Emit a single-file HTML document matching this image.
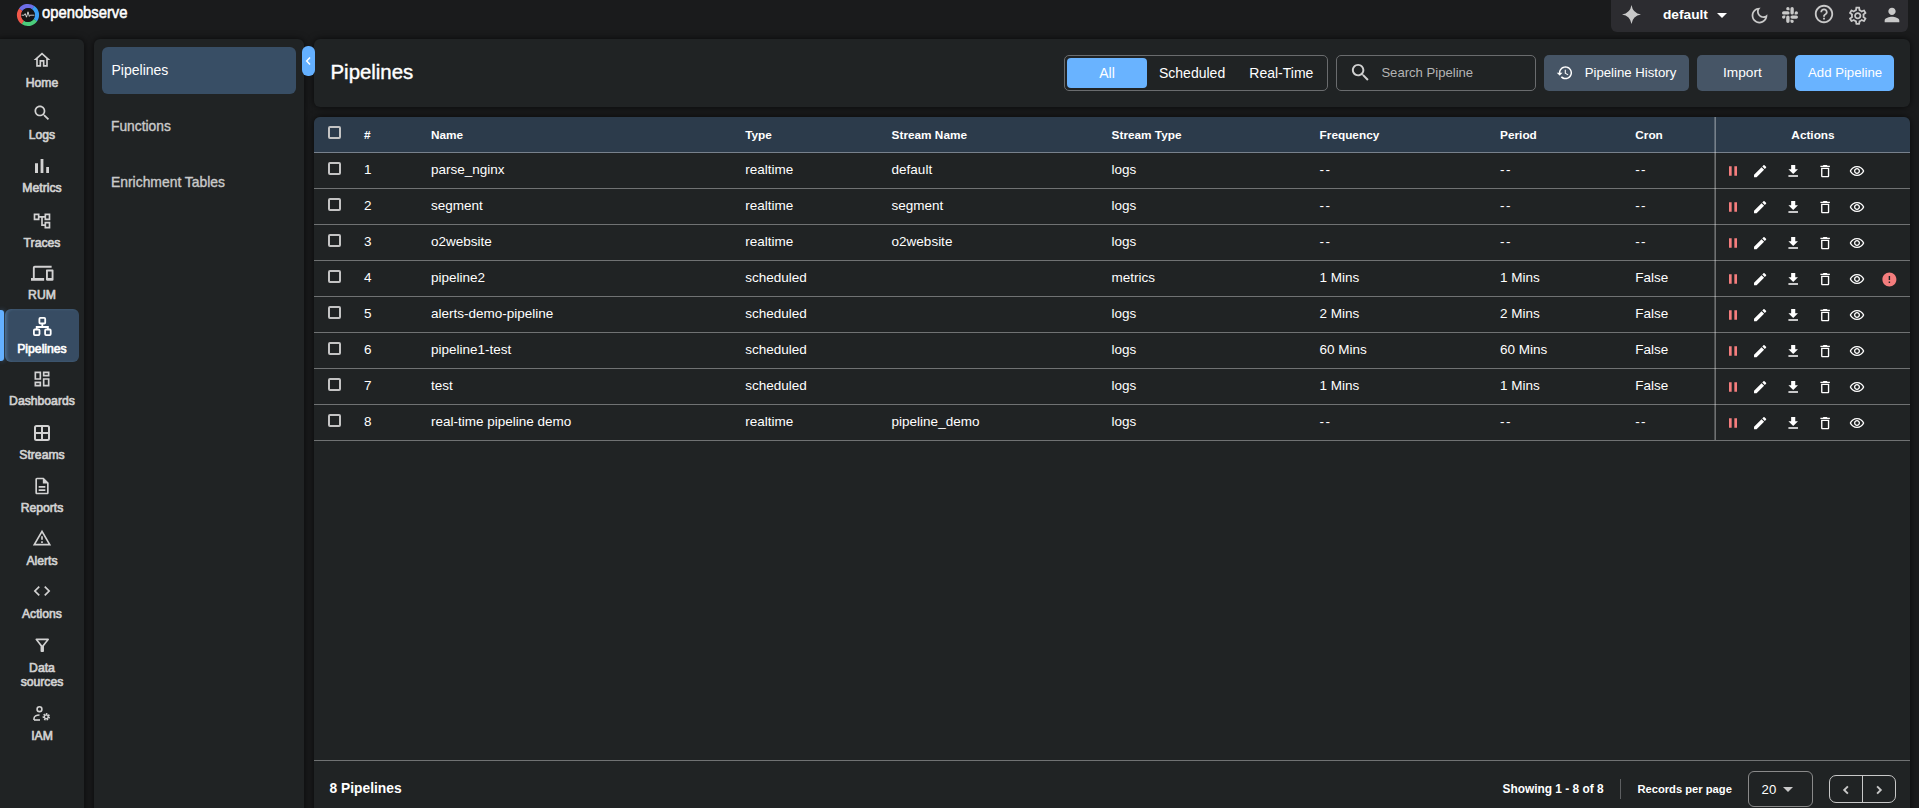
<!DOCTYPE html>
<html><head><meta charset="utf-8">
<style>
*{box-sizing:border-box;margin:0;padding:0}
html,body{width:1919px;height:808px;overflow:hidden;background:#1a1b1c;font-family:"Liberation Sans",sans-serif;color:#fff}
.abs{position:absolute}
.panel{position:absolute;background:#202324;box-shadow:0 0 7px rgba(0,0,0,.7)}
.t{position:absolute;white-space:nowrap;line-height:1}
svg{position:absolute;overflow:visible}
.cb{position:absolute;width:13px;height:13px;border:2px solid #c4c4c4;border-radius:2px}
.hl{position:absolute;left:314px;width:1596px;height:1px;background:rgba(255,255,255,.36)}
</style></head><body>

<svg style="left:16.5px;top:4px" width="22" height="22" viewBox="0 0 22 22">
<circle cx="11" cy="11" r="9" fill="none" stroke="#6e6ee8" stroke-width="4.2" stroke-dasharray="14.2 42.5" transform="rotate(-145 11 11)"/>
<circle cx="11" cy="11" r="9" fill="none" stroke="#3aa0f6" stroke-width="4.2" stroke-dasharray="14.2 42.5" transform="rotate(-55 11 11)"/>
<circle cx="11" cy="11" r="9" fill="none" stroke="#4bcd7c" stroke-width="4.2" stroke-dasharray="14.2 42.5" transform="rotate(35 11 11)"/>
<circle cx="11" cy="11" r="9" fill="none" stroke="#f1584a" stroke-width="4.2" stroke-dasharray="14.2 42.5" transform="rotate(125 11 11)"/>
<circle cx="11" cy="11" r="6.9" fill="#151515"/>
<path d="M4.6 11.2h2.6l1-1.6 1.3 3.6 1.5-5.4 1.3 4.6 0.9-1.2h4.2" fill="none" stroke="#f2f2f2" stroke-width="0.8"/>
</svg>
<div class="t" style="left:41.8px;top:4.47px;font-size:17.4px;color:#fff;font-weight:normal;-webkit-text-stroke:0.6px #fff;transform-origin:0 0;transform:scaleX(0.85)">openobserve</div>
<div class="abs" style="left:1611px;top:-6px;width:297px;height:37.5px;background:#2c2c30;border-radius:6px"></div>
<svg style="left:1621.5px;top:5px" width="19" height="19" viewBox="0 0 24 24"><path fill="#c9c9c9" d="M12 0Q13.6 10.4 24 12Q13.6 13.6 12 24Q10.4 13.6 0 12Q10.4 10.4 12 0z"/></svg>
<div class="t" style="left:1663px;top:7.60px;font-size:13.7px;color:#fff;font-weight:bold;">default</div>
<svg style="left:1710px;top:3px" width="24" height="24" viewBox="0 0 24 24"><path fill="#fff" d="M7 10l5 5 5-5z"/></svg>
<svg style="left:1749px;top:5px" width="21" height="21" viewBox="0 0 24 24"><path fill="#c9c9c9" d="M9.37 5.51c-.18.64-.27 1.31-.27 1.99 0 4.08 3.32 7.4 7.4 7.4.68 0 1.35-.09 1.99-.27C17.45 17.19 14.93 19 12 19c-3.86 0-7-3.14-7-7 0-2.93 1.81-5.450 4.37-6.49zM12 3c-4.97 0-9 4.03-9 9s4.03 9 9 9 9-4.03 9-9c0-.46-.04-.92-.1-1.36-.98 1.37-2.58 2.26-4.4 2.26-2.98 0-5.4-2.42-5.4-5.4 0-1.81.89-3.42 2.26-4.4-.44-.06-.9-.1-1.36-.1z"/></svg>
<svg style="left:1782px;top:7px" width="16" height="16" viewBox="0 0 24 24"><path fill="#c9c9c9" d="M5.042 15.165a2.528 2.528 0 0 1-2.52 2.523A2.528 2.528 0 0 1 0 15.165a2.527 2.527 0 0 1 2.522-2.52h2.52v2.52zM6.313 15.165a2.527 2.527 0 0 1 2.521-2.52 2.527 2.527 0 0 1 2.521 2.52v6.313A2.528 2.528 0 0 1 8.834 24a2.528 2.528 0 0 1-2.521-2.522v-6.313zM8.834 5.042a2.528 2.528 0 0 1-2.521-2.52A2.528 2.528 0 0 1 8.834 0a2.528 2.528 0 0 1 2.521 2.522v2.52H8.834zM8.834 6.313a2.528 2.528 0 0 1 2.521 2.521 2.528 2.528 0 0 1-2.521 2.521H2.522A2.528 2.528 0 0 1 0 8.834a2.528 2.528 0 0 1 2.522-2.521h6.312zM18.956 8.834a2.528 2.528 0 0 1 2.522-2.521A2.528 2.528 0 0 1 24 8.834a2.528 2.528 0 0 1-2.522 2.521h-2.522V8.834zM17.688 8.834a2.528 2.528 0 0 1-2.523 2.521 2.527 2.527 0 0 1-2.52-2.521V2.522A2.527 2.527 0 0 1 15.165 0a2.528 2.528 0 0 1 2.523 2.522v6.312zM15.165 18.956a2.528 2.528 0 0 1 2.523 2.522A2.528 2.528 0 0 1 15.165 24a2.527 2.527 0 0 1-2.52-2.522v-2.522h2.52zM15.165 17.688a2.527 2.527 0 0 1-2.52-2.523 2.526 2.526 0 0 1 2.52-2.52h6.313A2.527 2.527 0 0 1 24 15.165a2.528 2.528 0 0 1-2.522 2.523h-6.313z"/></svg>
<svg style="left:1813px;top:3px" width="22" height="22" viewBox="0 0 24 24"><path fill="#c9c9c9" d="M11 18h2v-2h-2v2zm1-16C6.48 2 2 6.48 2 12s4.48 10 10 10 10-4.48 10-10S17.52 2 12 2zm0 18c-4.41 0-8-3.59-8-8s3.59-8 8-8 8 3.59 8 8-3.59 8-8 8zm0-14c-2.21 0-4 1.79-4 4h2c0-1.1.9-2 2-2s2 .9 2 2c0 2-3 1.75-3 5h2c0-2.25 3-2.5 3-5 0-2.21-1.79-4-4-4z"/></svg>
<svg style="left:1846.5px;top:4.5px" width="21.5" height="21.5" viewBox="0 0 24 24"><path fill="#c9c9c9" d="M19.43 12.98c.04-.32.07-.64.07-.98 0-.34-.03-.66-.07-.98l2.11-1.65c.19-.15.24-.42.12-.64l-2-3.46c-.09-.16-.26-.25-.44-.25-.06 0-.12.01-.17.03l-2.49 1c-.52-.4-1.08-.73-1.69-.98l-.38-2.65C14.46 2.18 14.25 2 14 2h-4c-.25 0-.46.18-.49.42l-.38 2.65c-.61.25-1.17.59-1.690.98l-2.49-1c-.06-.02-.12-.03-.18-.03-.17 0-.34.09-.43.25l-2 3.46c-.13.22-.07.49.12.64l2.11 1.65c-.04.32-.07.65-.07.98 0 .33.03.66.07.98l-2.11 1.65c-.19.15-.24.42-.12.64l2 3.46c.09.16.26.25.44.25.06 0 .12-.01.17-.03l2.49-1c.52.4 1.08.73 1.69.98l.38 2.65c.03.24.24.42.49.42h4c.25 0 .46-.18.49-.42l.38-2.65c.61-.25 1.17-.59 1.69-.98l2.49 1c.06.02.12.03.18.03.17 0 .34-.09.43-.25l2-3.46c.12-.22.07-.49-.12-.64l-2.11-1.65zm-1.98-1.71c.04.31.05.52.05.73 0 .21-.02.43-.05.73l-.14 1.13.89.7 1.08.84-.7 1.21-1.27-.51-1.04-.42-.9.68c-.43.32-.84.56-1.25.73l-1.06.43-.16 1.13-.2 1.35h-1.4l-.19-1.35-.16-1.13-1.06-.43c-.43-.18-.83-.41-1.23-.71l-.91-.7-1.06.43-1.27.51-.7-1.21 1.08-.84.89-.7-.14-1.13c-.03-.31-.05-.54-.05-.74s.02-.43.05-.73l.14-1.13-.89-.7-1.08-.84.7-1.21 1.27.51 1.04.42.9-.68c.43-.32.84-.56 1.25-.73l1.06-.43.16-1.13.2-1.35h1.39l.19 1.35.16 1.13 1.06.43c.43.18.83.41 1.23.71l.91.7 1.06-.43 1.27-.51.7 1.21-1.07.85-.89.7.14 1.13zM12 8c-2.21 0-4 1.79-4 4s1.79 4 4 4 4-1.79 4-4-1.79-4-4-4zm0 6c-1.1 0-2-.9-2-2s.9-2 2-2 2 .9 2 2-.9 2-2 2z"/></svg>
<svg style="left:1880.5px;top:3.5px" width="22" height="22" viewBox="0 0 24 24"><path fill="#c9c9c9" d="M12 12c2.21 0 4-1.79 4-4s-1.79-4-4-4-4 1.79-4 4 1.79 4 4 4zm0 2c-2.670 0-8 1.34-8 4v2h16v-2c0-2.66-5.33-4-8-4z"/></svg>
<div class="panel" style="left:-6px;top:39px;width:90px;height:800px;border-radius:6px"></div>
<div class="abs" style="left:5px;top:309px;width:74px;height:53px;background:#374c63;border-radius:6px;box-shadow:inset 2px 0 3px rgba(120,170,220,.25)"></div>
<div class="abs" style="left:0;top:310px;width:4px;height:51px;background:#64b0ff;border-radius:0 3px 3px 0;box-shadow:0 0 5px rgba(100,176,255,.45)"></div>
<svg style="left:32px;top:50px" width="20" height="20" viewBox="0 0 24 24"><path fill="#d2d2d2" d="M12 5.69l5 4.5V18h-2v-6H9v6H7v-7.81l5-4.5M12 3L2 12h3v8h6v-6h2v6h6v-8h3L12 3z"/></svg>
<div class="t" style="left:25.729203125px;top:76.67px;font-size:12.2px;color:#d2d2d2;font-weight:normal;-webkit-text-stroke:0.65px #d2d2d2">Home</div>
<svg style="left:32px;top:102.6px" width="20" height="20" viewBox="0 0 24 24"><path fill="#d2d2d2" d="M15.5 14h-.79l-.28-.27C15.41 12.59 16 11.11 16 9.5 16 5.91 13.09 3 9.5 3S3 5.91 3 9.5 5.91 16 9.5 16c1.61 0 3.09-.59 4.23-1.57l.27.28v.79l5 4.99L20.49 19l-4.99-5zm-6 0C7.01 14 5 11.99 5 9.5S7.01 5 9.5 5 14 7.01 14 9.5 11.99 14 9.5 14z"/></svg>
<div class="t" style="left:28.773484375000002px;top:129.27px;font-size:12.2px;color:#d2d2d2;font-weight:normal;-webkit-text-stroke:0.65px #d2d2d2">Logs</div>
<svg style="left:29.8px;top:154.0px" width="24" height="24" viewBox="0 0 24 24"><path fill="#d2d2d2" d="M5 9.2h3V19H5zM10.6 5h2.8v14h-2.8zm5.6 8H19v6h-2.8z"/></svg>
<div class="t" style="left:22.345609375000002px;top:182.27px;font-size:12.2px;color:#d2d2d2;font-weight:normal;-webkit-text-stroke:0.65px #d2d2d2">Metrics</div>
<svg style="left:32px;top:210.5px" width="20" height="20" viewBox="0 0 24 24"><path fill="#d2d2d2" d="M22 11V3h-7v3H9V3H2v8h7V8h2v10h4v3h7v-8h-7v3h-2V8h2v3h7zM7 9H4V5h3v4zm10 6h3v4h-3v-4zm0-10h3v4h-3V5z"/></svg>
<div class="t" style="left:23.584671875px;top:236.67px;font-size:12.2px;color:#d2d2d2;font-weight:normal;-webkit-text-stroke:0.65px #d2d2d2">Traces</div>
<svg style="left:31px;top:262.0px" width="22.5" height="22.5" viewBox="0 0 24 24"><path fill="#d2d2d2" d="M4 6h18V4H4c-1.1 0-2 .9-2 2v11H0v3h14v-3H4V6zm19 2h-6c-.55 0-1 .45-1 1v10c0 .55.45 1 1 1h6c.55 0 1-.45 1-1V9c0-.55-.45-1-1-1zm-1 9h-4v-7h4v7z"/></svg>
<div class="t" style="left:28.108203125px;top:289.17px;font-size:12.2px;color:#d2d2d2;font-weight:normal;-webkit-text-stroke:0.65px #d2d2d2">RUM</div>
<svg style="left:33px;top:317px" width="19" height="19" viewBox="0 0 19 19"><g fill="none" stroke="#fff" stroke-width="1.8"><rect x="6.4" y="0.9" width="5.8" height="5.6" rx="1"/><rect x="0.9" y="12.5" width="5.6" height="5.6" rx="1"/><rect x="12.1" y="12.5" width="5.6" height="5.6" rx="1"/><path d="M9.3 6.5v3.5M3.7 12.5v-2.5h11.2v2.5"/></g></svg>
<div class="t" style="left:17.246390625000004px;top:342.67px;font-size:12.2px;color:#fff;font-weight:normal;-webkit-text-stroke:0.65px #fff">Pipelines</div>
<svg style="left:32px;top:369.4px" width="20" height="20" viewBox="0 0 24 24"><path fill="#d2d2d2" d="M19 5v2h-4V5h4M9 5v6H5V5h4m10 8v6h-4v-6h4M9 17v2H5v-2h4M21 3h-8v6h8V3zM11 3H3v10h8V3zm10 8h-8v10h8V11zm-10 4H3v6h8v-6z"/></svg>
<div class="t" style="left:9.110515625000005px;top:395.07px;font-size:12.2px;color:#d2d2d2;font-weight:normal;-webkit-text-stroke:0.65px #d2d2d2">Dashboards</div>
<svg style="left:33px;top:424px" width="18" height="18" viewBox="0 0 18 18"><rect x="2" y="2" width="14" height="14" rx="1.5" fill="none" stroke="#d2d2d2" stroke-width="2"/><path d="M9 2v14M2 9h14" stroke="#d2d2d2" stroke-width="2"/></svg>
<div class="t" style="left:19.289890625px;top:448.67px;font-size:12.2px;color:#d2d2d2;font-weight:normal;-webkit-text-stroke:0.65px #d2d2d2">Streams</div>
<svg style="left:32px;top:475.70000000000005px" width="20" height="20" viewBox="0 0 24 24"><path fill="#d2d2d2" d="M8 16h8v2H8zm0-4h8v2H8zm6-10H6c-1.1 0-2 .9-2 2v16c0 1.1.89 2 1.99 2H18c1.1 0 2-.9 2-2V8l-6-6zm4 18H6V4h7v5h5v11z"/></svg>
<div class="t" style="left:20.642375px;top:502.37px;font-size:12.2px;color:#d2d2d2;font-weight:normal;-webkit-text-stroke:0.65px #d2d2d2">Reports</div>
<svg style="left:32px;top:528.3px" width="20" height="20" viewBox="0 0 24 24"><path fill="#d2d2d2" d="M12 5.99L19.53 19H4.47L12 5.99M12 2L1 21h22L12 2zm1 14h-2v2h2v-2zm0-6h-2v4h2v-4z"/></svg>
<div class="t" style="left:26.407828125px;top:554.97px;font-size:12.2px;color:#d2d2d2;font-weight:normal;-webkit-text-stroke:0.65px #d2d2d2">Alerts</div>
<svg style="left:32px;top:581px" width="20" height="20" viewBox="0 0 24 24"><path fill="#d2d2d2" d="M9.4 16.6L4.8 12l4.6-4.6L8 6l-6 6 6 6 1.4-1.4zm5.2 0l4.6-4.6-4.6-4.6L16 6l6 6-6 6-1.4-1.4z"/></svg>
<div class="t" style="left:21.996765625000002px;top:607.67px;font-size:12.2px;color:#d2d2d2;font-weight:normal;-webkit-text-stroke:0.65px #d2d2d2">Actions</div>
<svg style="left:32.4px;top:634.8px" width="20.5" height="20.5" viewBox="0 0 24 24"><path fill="#d2d2d2" d="M4.25 5.61C6.27 8.2 10 13 10 13v6c0 .55.45 1 1 1h2c.55 0 1-.45 1-1v-6s3.72-4.8 5.74-7.39c.51-.66.04-1.61-.79-1.61H5.04c-.83 0-1.3.95-.79 1.61zM7 6h10l-5.01 6.3z"/></svg>
<div class="t" style="left:29.11565625px;top:661.67px;font-size:12.2px;color:#d2d2d2;font-weight:normal;-webkit-text-stroke:0.65px #d2d2d2">Data</div>
<div class="t" style="left:20.642375px;top:675.67px;font-size:12.2px;color:#d2d2d2;font-weight:normal;-webkit-text-stroke:0.65px #d2d2d2">sources</div>
<svg style="left:33px;top:706px" width="18" height="15" viewBox="0 0 18 15"><g fill="none" stroke="#d2d2d2" stroke-width="1.6">
<circle cx="6.5" cy="3.2" r="2.4"/><path d="M1 14v-1.5c0-2 2.5-3.5 5.5-3.5"/><path d="M1 14h6"/></g>
<circle cx="13.3" cy="10.8" r="2.6" fill="none" stroke="#d2d2d2" stroke-width="2.2" stroke-dasharray="1.4 0.9"/>
<circle cx="13.3" cy="10.8" r="1.9" fill="none" stroke="#d2d2d2" stroke-width="1.2"/></svg>
<div class="t" style="left:31.15534375px;top:729.97px;font-size:12.2px;color:#d2d2d2;font-weight:normal;-webkit-text-stroke:0.65px #d2d2d2">IAM</div>
<div class="panel" style="left:94px;top:39px;width:210px;height:800px;border-radius:6px"></div>
<div class="abs" style="left:102px;top:47px;width:194px;height:47px;background:#384e65;border-radius:6px"></div>
<div class="t" style="left:111.5px;top:63.15px;font-size:14px;color:#fff;font-weight:normal;">Pipelines</div>
<div class="t" style="left:111px;top:119.62px;font-size:13.8px;color:#cacaca;font-weight:normal;-webkit-text-stroke:0.35px #cacaca">Functions</div>
<div class="t" style="left:111px;top:175.63px;font-size:13.9px;color:#cacaca;font-weight:normal;-webkit-text-stroke:0.35px #cacaca">Enrichment Tables</div>
<div class="panel" style="left:314px;top:39px;width:1596px;height:68px;border-radius:6px"></div>
<div class="abs" style="left:302px;top:46px;width:12.5px;height:30px;background:#64b0ff;border-radius:6px"></div>
<svg style="left:304px;top:56px" width="9" height="10" viewBox="0 0 9 10"><path d="M6 1.5L2.7 5 6 8.5" fill="none" stroke="#fff" stroke-width="1.5"/></svg>
<div class="t" style="left:330.5px;top:62.23px;font-size:20.4px;color:#fff;font-weight:normal;-webkit-text-stroke:0.4px #fff">Pipelines</div>
<div class="abs" style="left:1064px;top:55px;width:264px;height:36px;border:1px solid #6a6c6e;border-radius:5px"></div>
<div class="abs" style="left:1067px;top:58px;width:80px;height:30px;background:#69b3ff;border-radius:4px"></div>
<div class="t" style="left:1099.22015625px;top:65.85px;font-size:14px;color:#fff;font-weight:normal;">All</div>
<div class="t" style="left:1159px;top:65.85px;font-size:14px;color:#fff;font-weight:normal;">Scheduled</div>
<div class="t" style="left:1249.3px;top:65.85px;font-size:14px;color:#fff;font-weight:normal;">Real-Time</div>
<div class="abs" style="left:1336px;top:55px;width:200px;height:36px;border:1px solid #6a6c6e;border-radius:5px"></div>
<svg style="left:1349px;top:61px" width="23" height="23" viewBox="0 0 24 24"><path fill="#d0d0d0" d="M15.5 14h-.79l-.28-.27C15.41 12.59 16 11.11 16 9.5 16 5.91 13.09 3 9.5 3S3 5.91 3 9.5 5.91 16 9.5 16c1.61 0 3.09-.59 4.23-1.57l.27.28v.79l5 4.99L20.49 19l-4.99-5zm-6 0C7.01 14 5 11.99 5 9.5S7.01 5 9.5 5 14 7.01 14 9.5 11.99 14 9.5 14z"/></svg>
<div class="t" style="left:1381.4px;top:66.11px;font-size:13.1px;color:#b4b4b4;font-weight:normal;">Search Pipeline</div>
<div class="abs" style="left:1544px;top:55px;width:145px;height:36px;background:#465566;border-radius:5px"></div>
<svg style="left:1555.5px;top:63.5px" width="17.5" height="17.5" viewBox="0 0 24 24"><path fill="#fff" d="M13 3c-4.97 0-9 4.03-9 9H1l3.89 3.89.07.14L9 12H6c0-3.87 3.13-7 7-7s7 3.13 7 7-3.13 7-7 7c-1.93 0-3.68-.79-4.94-2.06l-1.42 1.42C8.27 19.99 10.51 21 13 21c4.97 0 9-4.03 9-9s-4.03-9-9-9zm-1 5v5l4.28 2.54.72-1.21-3.5-2.08V8H12z"/></svg>
<div class="t" style="left:1584.7px;top:66.03px;font-size:13.2px;color:#fff;font-weight:normal;">Pipeline History</div>
<div class="abs" style="left:1697px;top:55px;width:90px;height:36px;background:#465566;border-radius:5px"></div>
<div class="t" style="left:1723px;top:65.60px;font-size:13.7px;color:#fff;font-weight:normal;">Import</div>
<div class="abs" style="left:1795px;top:55px;width:99px;height:36px;background:#69b3ff;border-radius:5px"></div>
<div class="t" style="left:1808px;top:66.03px;font-size:13.2px;color:#fff;font-weight:normal;">Add Pipeline</div>
<div class="panel" style="left:314px;top:117px;width:1596px;height:700px;border-radius:6px 6px 0 0"></div>
<div class="abs" style="left:314px;top:117px;width:1596px;height:36px;background:#2c3b4b;border-radius:6px 6px 0 0"></div>
<div class="cb" style="left:328px;top:126px"></div>
<div class="t" style="left:364px;top:129.51px;font-size:11.8px;color:#fff;font-weight:bold;">#</div>
<div class="t" style="left:431px;top:129.51px;font-size:11.8px;color:#fff;font-weight:bold;">Name</div>
<div class="t" style="left:745.2px;top:129.51px;font-size:11.8px;color:#fff;font-weight:bold;">Type</div>
<div class="t" style="left:891.6px;top:129.51px;font-size:11.8px;color:#fff;font-weight:bold;">Stream Name</div>
<div class="t" style="left:1111.6px;top:129.51px;font-size:11.8px;color:#fff;font-weight:bold;">Stream Type</div>
<div class="t" style="left:1319.6px;top:129.51px;font-size:11.8px;color:#fff;font-weight:bold;">Frequency</div>
<div class="t" style="left:1500.1px;top:129.51px;font-size:11.8px;color:#fff;font-weight:bold;">Period</div>
<div class="t" style="left:1635.3px;top:129.51px;font-size:11.8px;color:#fff;font-weight:bold;">Cron</div>
<div class="t" style="left:1791.366359375px;top:129.51px;font-size:11.8px;color:#fff;font-weight:bold;">Actions</div>
<div class="hl" style="top:152px"></div>
<div class="cb" style="left:328px;top:162px"></div>
<div class="t" style="left:364px;top:162.57px;font-size:13.5px;color:#fff;font-weight:normal;">1</div>
<div class="t" style="left:431px;top:162.57px;font-size:13.5px;color:#fff;font-weight:normal;">parse_nginx</div>
<div class="t" style="left:745.2px;top:162.57px;font-size:13.5px;color:#fff;font-weight:normal;">realtime</div>
<div class="t" style="left:891.6px;top:162.57px;font-size:13.5px;color:#fff;font-weight:normal;">default</div>
<div class="t" style="left:1111.6px;top:162.57px;font-size:13.5px;color:#fff;font-weight:normal;">logs</div>
<div class="t" style="left:1319.6px;top:162.57px;font-size:13.5px;color:#fff;font-weight:normal;letter-spacing:1.3px">--</div>
<div class="t" style="left:1500.1px;top:162.57px;font-size:13.5px;color:#fff;font-weight:normal;letter-spacing:1.3px">--</div>
<div class="t" style="left:1635.3px;top:162.57px;font-size:13.5px;color:#fff;font-weight:normal;letter-spacing:1.3px">--</div>
<div class="hl" style="top:188px"></div>
<svg style="left:1724.9px;top:163.1px" width="16" height="16" viewBox="0 0 24 24"><path fill="#f47d7d" d="M6 19h4V5H6v14zm8-14v14h4V5h-4z"/></svg>
<svg style="left:1752.4px;top:163.0px" width="16.3" height="16.3" viewBox="0 0 24 24"><path fill="#fff" d="M3 17.25V21h3.75L17.81 9.94l-3.75-3.75L3 17.25zM20.71 7.04c.39-.39.39-1.02 0-1.41l-2.34-2.34c-.39-.39-1.02-.39-1.41 0l-1.83 1.83 3.75 3.75 1.83-1.83z"/></svg>
<svg style="left:1784.7px;top:162.8px" width="16.4" height="16.4" viewBox="0 0 24 24"><path fill="#fff" d="M19 9h-4V3H9v6H5l7 7 7-7zM5 18v2h14v-2H5z"/></svg>
<svg style="left:1816.6px;top:162.9px" width="16.3" height="16.3" viewBox="0 0 24 24"><path fill="#fff" d="M6 19c0 1.1.9 2 2 2h8c1.1 0 2-.9 2-2V7H6v12zM8 9h8v10H8V9zm7.5-5l-1-1h-5l-1 1H5v2h14V4z"/></svg>
<svg style="left:1849px;top:162.9px" width="16" height="16" viewBox="0 0 24 24"><path fill="#fff" d="M12 6.5c3.79 0 7.17 2.13 8.82 5.5-1.65 3.37-5.02 5.5-8.82 5.5S4.83 15.37 3.18 12C4.83 8.63 8.21 6.5 12 6.5m0-2C7 4.5 2.73 7.61 1 12c1.73 4.39 6 7.5 11 7.5s9.27-3.11 11-7.5c-1.73-4.39-6-7.5-11-7.5zm0 5c1.38 0 2.5 1.12 2.5 2.5s-1.12 2.5-2.5 2.5-2.5-1.12-2.5-2.5 1.12-2.5 2.5-2.5m0-2c-2.48 0-4.5 2.02-4.5 4.5s2.02 4.5 4.5 4.5 4.5-2.02 4.5-4.5-2.02-4.5-4.5-4.5z"/></svg>
<div class="cb" style="left:328px;top:198px"></div>
<div class="t" style="left:364px;top:198.57px;font-size:13.5px;color:#fff;font-weight:normal;">2</div>
<div class="t" style="left:431px;top:198.57px;font-size:13.5px;color:#fff;font-weight:normal;">segment</div>
<div class="t" style="left:745.2px;top:198.57px;font-size:13.5px;color:#fff;font-weight:normal;">realtime</div>
<div class="t" style="left:891.6px;top:198.57px;font-size:13.5px;color:#fff;font-weight:normal;">segment</div>
<div class="t" style="left:1111.6px;top:198.57px;font-size:13.5px;color:#fff;font-weight:normal;">logs</div>
<div class="t" style="left:1319.6px;top:198.57px;font-size:13.5px;color:#fff;font-weight:normal;letter-spacing:1.3px">--</div>
<div class="t" style="left:1500.1px;top:198.57px;font-size:13.5px;color:#fff;font-weight:normal;letter-spacing:1.3px">--</div>
<div class="t" style="left:1635.3px;top:198.57px;font-size:13.5px;color:#fff;font-weight:normal;letter-spacing:1.3px">--</div>
<div class="hl" style="top:224px"></div>
<svg style="left:1724.9px;top:199.1px" width="16" height="16" viewBox="0 0 24 24"><path fill="#f47d7d" d="M6 19h4V5H6v14zm8-14v14h4V5h-4z"/></svg>
<svg style="left:1752.4px;top:199.0px" width="16.3" height="16.3" viewBox="0 0 24 24"><path fill="#fff" d="M3 17.25V21h3.75L17.81 9.94l-3.75-3.75L3 17.25zM20.71 7.04c.39-.39.39-1.02 0-1.41l-2.34-2.34c-.39-.39-1.02-.39-1.41 0l-1.83 1.83 3.75 3.75 1.83-1.83z"/></svg>
<svg style="left:1784.7px;top:198.8px" width="16.4" height="16.4" viewBox="0 0 24 24"><path fill="#fff" d="M19 9h-4V3H9v6H5l7 7 7-7zM5 18v2h14v-2H5z"/></svg>
<svg style="left:1816.6px;top:198.9px" width="16.3" height="16.3" viewBox="0 0 24 24"><path fill="#fff" d="M6 19c0 1.1.9 2 2 2h8c1.1 0 2-.9 2-2V7H6v12zM8 9h8v10H8V9zm7.5-5l-1-1h-5l-1 1H5v2h14V4z"/></svg>
<svg style="left:1849px;top:198.9px" width="16" height="16" viewBox="0 0 24 24"><path fill="#fff" d="M12 6.5c3.79 0 7.17 2.13 8.82 5.5-1.65 3.37-5.02 5.5-8.82 5.5S4.83 15.37 3.18 12C4.83 8.63 8.21 6.5 12 6.5m0-2C7 4.5 2.73 7.61 1 12c1.73 4.39 6 7.5 11 7.5s9.27-3.11 11-7.5c-1.73-4.39-6-7.5-11-7.5zm0 5c1.38 0 2.5 1.12 2.5 2.5s-1.12 2.5-2.5 2.5-2.5-1.12-2.5-2.5 1.12-2.5 2.5-2.5m0-2c-2.48 0-4.5 2.02-4.5 4.5s2.02 4.5 4.5 4.5 4.5-2.02 4.5-4.5-2.02-4.5-4.5-4.5z"/></svg>
<div class="cb" style="left:328px;top:234px"></div>
<div class="t" style="left:364px;top:234.57px;font-size:13.5px;color:#fff;font-weight:normal;">3</div>
<div class="t" style="left:431px;top:234.57px;font-size:13.5px;color:#fff;font-weight:normal;">o2website</div>
<div class="t" style="left:745.2px;top:234.57px;font-size:13.5px;color:#fff;font-weight:normal;">realtime</div>
<div class="t" style="left:891.6px;top:234.57px;font-size:13.5px;color:#fff;font-weight:normal;">o2website</div>
<div class="t" style="left:1111.6px;top:234.57px;font-size:13.5px;color:#fff;font-weight:normal;">logs</div>
<div class="t" style="left:1319.6px;top:234.57px;font-size:13.5px;color:#fff;font-weight:normal;letter-spacing:1.3px">--</div>
<div class="t" style="left:1500.1px;top:234.57px;font-size:13.5px;color:#fff;font-weight:normal;letter-spacing:1.3px">--</div>
<div class="t" style="left:1635.3px;top:234.57px;font-size:13.5px;color:#fff;font-weight:normal;letter-spacing:1.3px">--</div>
<div class="hl" style="top:260px"></div>
<svg style="left:1724.9px;top:235.1px" width="16" height="16" viewBox="0 0 24 24"><path fill="#f47d7d" d="M6 19h4V5H6v14zm8-14v14h4V5h-4z"/></svg>
<svg style="left:1752.4px;top:235.0px" width="16.3" height="16.3" viewBox="0 0 24 24"><path fill="#fff" d="M3 17.25V21h3.75L17.81 9.94l-3.75-3.75L3 17.25zM20.71 7.04c.39-.39.39-1.02 0-1.41l-2.34-2.34c-.39-.39-1.02-.39-1.41 0l-1.83 1.83 3.75 3.75 1.83-1.83z"/></svg>
<svg style="left:1784.7px;top:234.8px" width="16.4" height="16.4" viewBox="0 0 24 24"><path fill="#fff" d="M19 9h-4V3H9v6H5l7 7 7-7zM5 18v2h14v-2H5z"/></svg>
<svg style="left:1816.6px;top:234.9px" width="16.3" height="16.3" viewBox="0 0 24 24"><path fill="#fff" d="M6 19c0 1.1.9 2 2 2h8c1.1 0 2-.9 2-2V7H6v12zM8 9h8v10H8V9zm7.5-5l-1-1h-5l-1 1H5v2h14V4z"/></svg>
<svg style="left:1849px;top:234.9px" width="16" height="16" viewBox="0 0 24 24"><path fill="#fff" d="M12 6.5c3.79 0 7.17 2.13 8.82 5.5-1.65 3.37-5.02 5.5-8.82 5.5S4.83 15.37 3.18 12C4.83 8.63 8.21 6.5 12 6.5m0-2C7 4.5 2.73 7.61 1 12c1.73 4.39 6 7.5 11 7.5s9.27-3.11 11-7.5c-1.73-4.39-6-7.5-11-7.5zm0 5c1.38 0 2.5 1.12 2.5 2.5s-1.12 2.5-2.5 2.5-2.5-1.12-2.5-2.5 1.12-2.5 2.5-2.5m0-2c-2.48 0-4.5 2.02-4.5 4.5s2.02 4.5 4.5 4.5 4.5-2.02 4.5-4.5-2.02-4.5-4.5-4.5z"/></svg>
<div class="cb" style="left:328px;top:270px"></div>
<div class="t" style="left:364px;top:270.57px;font-size:13.5px;color:#fff;font-weight:normal;">4</div>
<div class="t" style="left:431px;top:270.57px;font-size:13.5px;color:#fff;font-weight:normal;">pipeline2</div>
<div class="t" style="left:745.2px;top:270.57px;font-size:13.5px;color:#fff;font-weight:normal;">scheduled</div>
<div class="t" style="left:1111.6px;top:270.57px;font-size:13.5px;color:#fff;font-weight:normal;">metrics</div>
<div class="t" style="left:1319.6px;top:270.57px;font-size:13.5px;color:#fff;font-weight:normal;">1 Mins</div>
<div class="t" style="left:1500.1px;top:270.57px;font-size:13.5px;color:#fff;font-weight:normal;">1 Mins</div>
<div class="t" style="left:1635.3px;top:270.57px;font-size:13.5px;color:#fff;font-weight:normal;">False</div>
<div class="hl" style="top:296px"></div>
<svg style="left:1724.9px;top:271.1px" width="16" height="16" viewBox="0 0 24 24"><path fill="#f47d7d" d="M6 19h4V5H6v14zm8-14v14h4V5h-4z"/></svg>
<svg style="left:1752.4px;top:271.0px" width="16.3" height="16.3" viewBox="0 0 24 24"><path fill="#fff" d="M3 17.25V21h3.75L17.81 9.94l-3.75-3.75L3 17.25zM20.71 7.04c.39-.39.39-1.02 0-1.41l-2.34-2.34c-.39-.39-1.02-.39-1.41 0l-1.83 1.83 3.75 3.75 1.83-1.83z"/></svg>
<svg style="left:1784.7px;top:270.8px" width="16.4" height="16.4" viewBox="0 0 24 24"><path fill="#fff" d="M19 9h-4V3H9v6H5l7 7 7-7zM5 18v2h14v-2H5z"/></svg>
<svg style="left:1816.6px;top:270.9px" width="16.3" height="16.3" viewBox="0 0 24 24"><path fill="#fff" d="M6 19c0 1.1.9 2 2 2h8c1.1 0 2-.9 2-2V7H6v12zM8 9h8v10H8V9zm7.5-5l-1-1h-5l-1 1H5v2h14V4z"/></svg>
<svg style="left:1849px;top:270.9px" width="16" height="16" viewBox="0 0 24 24"><path fill="#fff" d="M12 6.5c3.79 0 7.17 2.13 8.82 5.5-1.65 3.37-5.02 5.5-8.82 5.5S4.83 15.37 3.18 12C4.83 8.63 8.21 6.5 12 6.5m0-2C7 4.5 2.73 7.61 1 12c1.73 4.39 6 7.5 11 7.5s9.27-3.11 11-7.5c-1.73-4.39-6-7.5-11-7.5zm0 5c1.38 0 2.5 1.12 2.5 2.5s-1.12 2.5-2.5 2.5-2.5-1.12-2.5-2.5 1.12-2.5 2.5-2.5m0-2c-2.48 0-4.5 2.02-4.5 4.5s2.02 4.5 4.5 4.5 4.5-2.02 4.5-4.5-2.02-4.5-4.5-4.5z"/></svg>
<svg style="left:1880.5px;top:270.5px" width="16.8" height="16.8" viewBox="0 0 24 24"><path fill="#f47d7d" d="M12 2C6.48 2 2 6.48 2 12s4.48 10 10 10 10-4.48 10-10S17.52 2 12 2zm1 15h-2v-2h2v2zm0-4h-2V7h2v6z"/></svg>
<div class="cb" style="left:328px;top:306px"></div>
<div class="t" style="left:364px;top:306.57px;font-size:13.5px;color:#fff;font-weight:normal;">5</div>
<div class="t" style="left:431px;top:306.57px;font-size:13.5px;color:#fff;font-weight:normal;">alerts-demo-pipeline</div>
<div class="t" style="left:745.2px;top:306.57px;font-size:13.5px;color:#fff;font-weight:normal;">scheduled</div>
<div class="t" style="left:1111.6px;top:306.57px;font-size:13.5px;color:#fff;font-weight:normal;">logs</div>
<div class="t" style="left:1319.6px;top:306.57px;font-size:13.5px;color:#fff;font-weight:normal;">2 Mins</div>
<div class="t" style="left:1500.1px;top:306.57px;font-size:13.5px;color:#fff;font-weight:normal;">2 Mins</div>
<div class="t" style="left:1635.3px;top:306.57px;font-size:13.5px;color:#fff;font-weight:normal;">False</div>
<div class="hl" style="top:332px"></div>
<svg style="left:1724.9px;top:307.1px" width="16" height="16" viewBox="0 0 24 24"><path fill="#f47d7d" d="M6 19h4V5H6v14zm8-14v14h4V5h-4z"/></svg>
<svg style="left:1752.4px;top:307.0px" width="16.3" height="16.3" viewBox="0 0 24 24"><path fill="#fff" d="M3 17.25V21h3.75L17.81 9.94l-3.75-3.75L3 17.25zM20.71 7.04c.39-.39.39-1.02 0-1.41l-2.34-2.34c-.39-.39-1.02-.39-1.41 0l-1.83 1.83 3.75 3.75 1.83-1.83z"/></svg>
<svg style="left:1784.7px;top:306.8px" width="16.4" height="16.4" viewBox="0 0 24 24"><path fill="#fff" d="M19 9h-4V3H9v6H5l7 7 7-7zM5 18v2h14v-2H5z"/></svg>
<svg style="left:1816.6px;top:306.9px" width="16.3" height="16.3" viewBox="0 0 24 24"><path fill="#fff" d="M6 19c0 1.1.9 2 2 2h8c1.1 0 2-.9 2-2V7H6v12zM8 9h8v10H8V9zm7.5-5l-1-1h-5l-1 1H5v2h14V4z"/></svg>
<svg style="left:1849px;top:306.9px" width="16" height="16" viewBox="0 0 24 24"><path fill="#fff" d="M12 6.5c3.79 0 7.17 2.13 8.82 5.5-1.65 3.37-5.02 5.5-8.82 5.5S4.83 15.37 3.18 12C4.83 8.63 8.21 6.5 12 6.5m0-2C7 4.5 2.73 7.61 1 12c1.73 4.39 6 7.5 11 7.5s9.27-3.11 11-7.5c-1.73-4.39-6-7.5-11-7.5zm0 5c1.38 0 2.5 1.12 2.5 2.5s-1.12 2.5-2.5 2.5-2.5-1.12-2.5-2.5 1.12-2.5 2.5-2.5m0-2c-2.48 0-4.5 2.02-4.5 4.5s2.02 4.5 4.5 4.5 4.5-2.02 4.5-4.5-2.02-4.5-4.5-4.5z"/></svg>
<div class="cb" style="left:328px;top:342px"></div>
<div class="t" style="left:364px;top:342.57px;font-size:13.5px;color:#fff;font-weight:normal;">6</div>
<div class="t" style="left:431px;top:342.57px;font-size:13.5px;color:#fff;font-weight:normal;">pipeline1-test</div>
<div class="t" style="left:745.2px;top:342.57px;font-size:13.5px;color:#fff;font-weight:normal;">scheduled</div>
<div class="t" style="left:1111.6px;top:342.57px;font-size:13.5px;color:#fff;font-weight:normal;">logs</div>
<div class="t" style="left:1319.6px;top:342.57px;font-size:13.5px;color:#fff;font-weight:normal;">60 Mins</div>
<div class="t" style="left:1500.1px;top:342.57px;font-size:13.5px;color:#fff;font-weight:normal;">60 Mins</div>
<div class="t" style="left:1635.3px;top:342.57px;font-size:13.5px;color:#fff;font-weight:normal;">False</div>
<div class="hl" style="top:368px"></div>
<svg style="left:1724.9px;top:343.1px" width="16" height="16" viewBox="0 0 24 24"><path fill="#f47d7d" d="M6 19h4V5H6v14zm8-14v14h4V5h-4z"/></svg>
<svg style="left:1752.4px;top:343.0px" width="16.3" height="16.3" viewBox="0 0 24 24"><path fill="#fff" d="M3 17.25V21h3.75L17.81 9.94l-3.75-3.75L3 17.25zM20.71 7.04c.39-.39.39-1.02 0-1.41l-2.34-2.34c-.39-.39-1.02-.39-1.41 0l-1.83 1.83 3.75 3.75 1.83-1.83z"/></svg>
<svg style="left:1784.7px;top:342.8px" width="16.4" height="16.4" viewBox="0 0 24 24"><path fill="#fff" d="M19 9h-4V3H9v6H5l7 7 7-7zM5 18v2h14v-2H5z"/></svg>
<svg style="left:1816.6px;top:342.9px" width="16.3" height="16.3" viewBox="0 0 24 24"><path fill="#fff" d="M6 19c0 1.1.9 2 2 2h8c1.1 0 2-.9 2-2V7H6v12zM8 9h8v10H8V9zm7.5-5l-1-1h-5l-1 1H5v2h14V4z"/></svg>
<svg style="left:1849px;top:342.9px" width="16" height="16" viewBox="0 0 24 24"><path fill="#fff" d="M12 6.5c3.79 0 7.17 2.13 8.82 5.5-1.65 3.37-5.02 5.5-8.82 5.5S4.83 15.37 3.18 12C4.83 8.63 8.21 6.5 12 6.5m0-2C7 4.5 2.73 7.61 1 12c1.73 4.39 6 7.5 11 7.5s9.27-3.11 11-7.5c-1.73-4.39-6-7.5-11-7.5zm0 5c1.38 0 2.5 1.12 2.5 2.5s-1.12 2.5-2.5 2.5-2.5-1.12-2.5-2.5 1.12-2.5 2.5-2.5m0-2c-2.48 0-4.5 2.02-4.5 4.5s2.02 4.5 4.5 4.5 4.5-2.02 4.5-4.5-2.02-4.5-4.5-4.5z"/></svg>
<div class="cb" style="left:328px;top:378px"></div>
<div class="t" style="left:364px;top:378.57px;font-size:13.5px;color:#fff;font-weight:normal;">7</div>
<div class="t" style="left:431px;top:378.57px;font-size:13.5px;color:#fff;font-weight:normal;">test</div>
<div class="t" style="left:745.2px;top:378.57px;font-size:13.5px;color:#fff;font-weight:normal;">scheduled</div>
<div class="t" style="left:1111.6px;top:378.57px;font-size:13.5px;color:#fff;font-weight:normal;">logs</div>
<div class="t" style="left:1319.6px;top:378.57px;font-size:13.5px;color:#fff;font-weight:normal;">1 Mins</div>
<div class="t" style="left:1500.1px;top:378.57px;font-size:13.5px;color:#fff;font-weight:normal;">1 Mins</div>
<div class="t" style="left:1635.3px;top:378.57px;font-size:13.5px;color:#fff;font-weight:normal;">False</div>
<div class="hl" style="top:404px"></div>
<svg style="left:1724.9px;top:379.1px" width="16" height="16" viewBox="0 0 24 24"><path fill="#f47d7d" d="M6 19h4V5H6v14zm8-14v14h4V5h-4z"/></svg>
<svg style="left:1752.4px;top:379.0px" width="16.3" height="16.3" viewBox="0 0 24 24"><path fill="#fff" d="M3 17.25V21h3.75L17.81 9.94l-3.75-3.75L3 17.25zM20.71 7.04c.39-.39.39-1.02 0-1.41l-2.34-2.34c-.39-.39-1.02-.39-1.41 0l-1.83 1.83 3.75 3.75 1.83-1.83z"/></svg>
<svg style="left:1784.7px;top:378.8px" width="16.4" height="16.4" viewBox="0 0 24 24"><path fill="#fff" d="M19 9h-4V3H9v6H5l7 7 7-7zM5 18v2h14v-2H5z"/></svg>
<svg style="left:1816.6px;top:378.9px" width="16.3" height="16.3" viewBox="0 0 24 24"><path fill="#fff" d="M6 19c0 1.1.9 2 2 2h8c1.1 0 2-.9 2-2V7H6v12zM8 9h8v10H8V9zm7.5-5l-1-1h-5l-1 1H5v2h14V4z"/></svg>
<svg style="left:1849px;top:378.9px" width="16" height="16" viewBox="0 0 24 24"><path fill="#fff" d="M12 6.5c3.79 0 7.17 2.13 8.82 5.5-1.65 3.37-5.02 5.5-8.82 5.5S4.83 15.37 3.18 12C4.83 8.63 8.21 6.5 12 6.5m0-2C7 4.5 2.73 7.61 1 12c1.73 4.39 6 7.5 11 7.5s9.27-3.11 11-7.5c-1.73-4.39-6-7.5-11-7.5zm0 5c1.38 0 2.5 1.12 2.5 2.5s-1.12 2.5-2.5 2.5-2.5-1.12-2.5-2.5 1.12-2.5 2.5-2.5m0-2c-2.48 0-4.5 2.02-4.5 4.5s2.02 4.5 4.5 4.5 4.5-2.02 4.5-4.5-2.02-4.5-4.5-4.5z"/></svg>
<div class="cb" style="left:328px;top:414px"></div>
<div class="t" style="left:364px;top:414.57px;font-size:13.5px;color:#fff;font-weight:normal;">8</div>
<div class="t" style="left:431px;top:414.57px;font-size:13.5px;color:#fff;font-weight:normal;">real-time pipeline demo</div>
<div class="t" style="left:745.2px;top:414.57px;font-size:13.5px;color:#fff;font-weight:normal;">realtime</div>
<div class="t" style="left:891.6px;top:414.57px;font-size:13.5px;color:#fff;font-weight:normal;">pipeline_demo</div>
<div class="t" style="left:1111.6px;top:414.57px;font-size:13.5px;color:#fff;font-weight:normal;">logs</div>
<div class="t" style="left:1319.6px;top:414.57px;font-size:13.5px;color:#fff;font-weight:normal;letter-spacing:1.3px">--</div>
<div class="t" style="left:1500.1px;top:414.57px;font-size:13.5px;color:#fff;font-weight:normal;letter-spacing:1.3px">--</div>
<div class="t" style="left:1635.3px;top:414.57px;font-size:13.5px;color:#fff;font-weight:normal;letter-spacing:1.3px">--</div>
<div class="hl" style="top:440px"></div>
<svg style="left:1724.9px;top:415.1px" width="16" height="16" viewBox="0 0 24 24"><path fill="#f47d7d" d="M6 19h4V5H6v14zm8-14v14h4V5h-4z"/></svg>
<svg style="left:1752.4px;top:415.0px" width="16.3" height="16.3" viewBox="0 0 24 24"><path fill="#fff" d="M3 17.25V21h3.75L17.81 9.94l-3.75-3.75L3 17.25zM20.71 7.04c.39-.39.39-1.02 0-1.41l-2.34-2.34c-.39-.39-1.02-.39-1.41 0l-1.83 1.83 3.75 3.75 1.83-1.83z"/></svg>
<svg style="left:1784.7px;top:414.8px" width="16.4" height="16.4" viewBox="0 0 24 24"><path fill="#fff" d="M19 9h-4V3H9v6H5l7 7 7-7zM5 18v2h14v-2H5z"/></svg>
<svg style="left:1816.6px;top:414.9px" width="16.3" height="16.3" viewBox="0 0 24 24"><path fill="#fff" d="M6 19c0 1.1.9 2 2 2h8c1.1 0 2-.9 2-2V7H6v12zM8 9h8v10H8V9zm7.5-5l-1-1h-5l-1 1H5v2h14V4z"/></svg>
<svg style="left:1849px;top:414.9px" width="16" height="16" viewBox="0 0 24 24"><path fill="#fff" d="M12 6.5c3.79 0 7.17 2.13 8.82 5.5-1.65 3.37-5.02 5.5-8.82 5.5S4.83 15.37 3.18 12C4.83 8.63 8.21 6.5 12 6.5m0-2C7 4.5 2.73 7.61 1 12c1.73 4.39 6 7.5 11 7.5s9.27-3.11 11-7.5c-1.73-4.39-6-7.5-11-7.5zm0 5c1.38 0 2.5 1.12 2.5 2.5s-1.12 2.5-2.5 2.5-2.5-1.12-2.5-2.5 1.12-2.5 2.5-2.5m0-2c-2.48 0-4.5 2.02-4.5 4.5s2.02 4.5 4.5 4.5 4.5-2.02 4.5-4.5-2.02-4.5-4.5-4.5z"/></svg>
<div class="abs" style="left:1713.5px;top:117px;width:2.7px;height:323px;background:linear-gradient(90deg,rgba(255,255,255,.12),rgba(255,255,255,.3) 50%,rgba(255,255,255,.4))"></div>
<div class="hl" style="top:760px"></div>
<div class="t" style="left:329.5px;top:781.72px;font-size:13.8px;color:#fff;font-weight:bold;">8 Pipelines</div>
<div class="t" style="left:1502.5px;top:783.93px;font-size:11.9px;color:#fff;font-weight:bold;">Showing 1 - 8 of 8</div>
<div class="abs" style="left:1620px;top:778.5px;width:1px;height:20px;background:#5d5f61"></div>
<div class="t" style="left:1637.4px;top:783.52px;font-size:11.2px;color:#fff;font-weight:bold;">Records per page</div>
<div class="abs" style="left:1748px;top:771px;width:65px;height:36px;border:1px solid #8a8a8a;border-radius:6px"></div>
<div class="t" style="left:1761.6px;top:782.73px;font-size:13.2px;color:#fff;font-weight:normal;">20</div>
<svg style="left:1776px;top:776.5px" width="24" height="24" viewBox="0 0 24 24"><path fill="#c9c9c9" d="M7 10l5 5 5-5z"/></svg>
<div class="abs" style="left:1829px;top:775px;width:67px;height:28px;border:1.3px solid #c8c8c8;border-radius:7px"></div>
<div class="abs" style="left:1862.3px;top:775.5px;width:1px;height:27px;background:#c8c8c8"></div>
<svg style="left:1841px;top:783.5px" width="10" height="12" viewBox="0 0 10 12"><path d="M6.9 2.4L3.2 6l3.7 3.6" fill="none" stroke="#c8c8c8" stroke-width="1.9"/></svg>
<svg style="left:1873.5px;top:783.5px" width="10" height="12" viewBox="0 0 10 12"><path d="M3.1 2.4L6.8 6l-3.7 3.6" fill="none" stroke="#c8c8c8" stroke-width="1.9"/></svg>
</body></html>
